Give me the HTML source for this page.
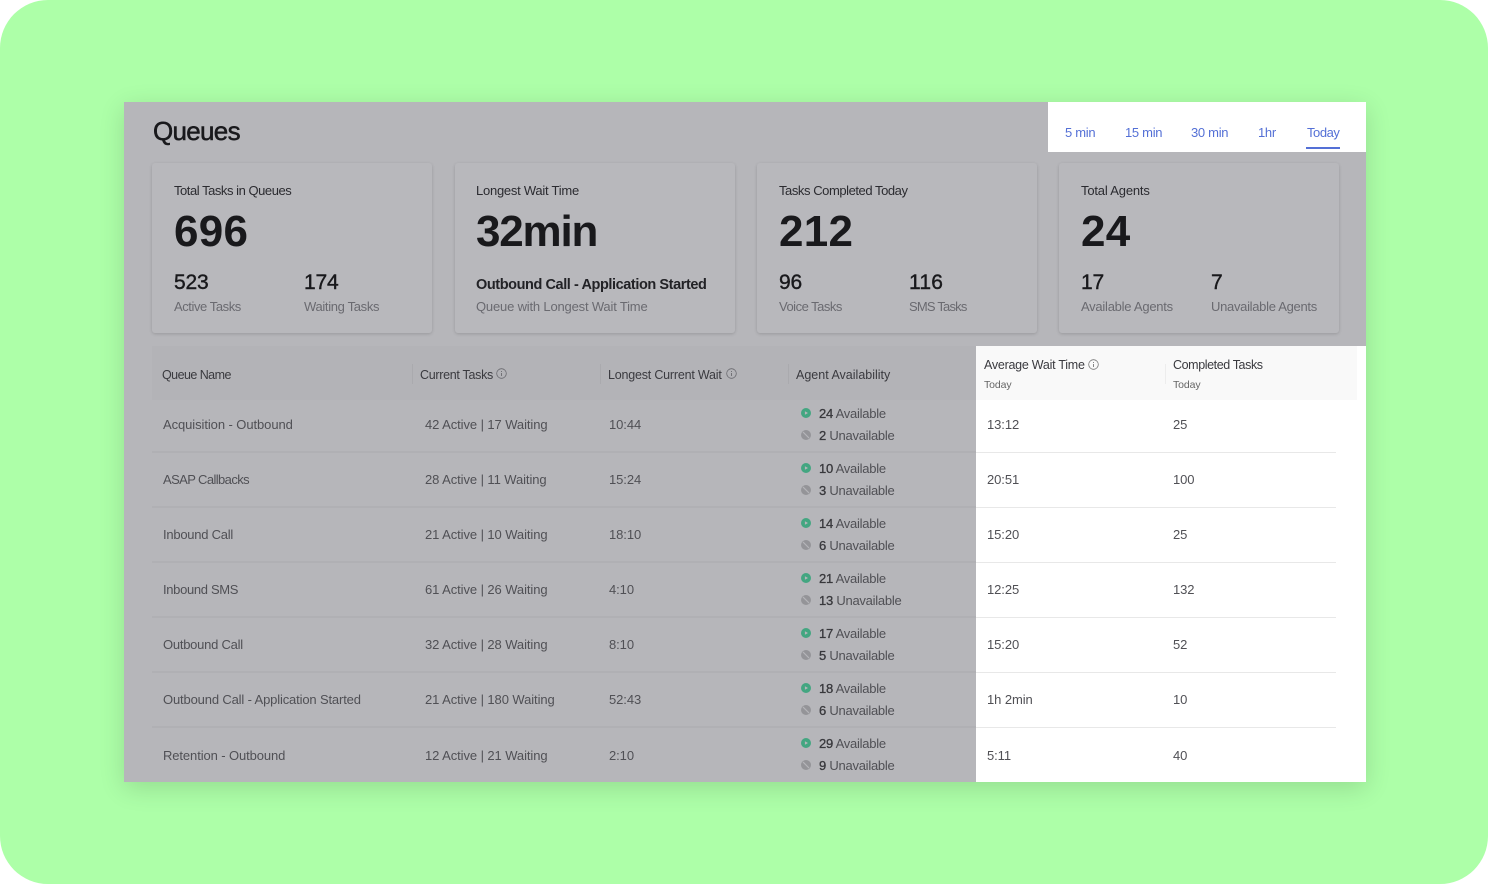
<!DOCTYPE html>
<html><head><meta charset="utf-8"><title>Queues</title>
<style>
html,body{margin:0;padding:0;background:#fff}
#s{position:relative;width:1488px;height:884px;overflow:hidden;background:#fff;font-family:"Liberation Sans",sans-serif}
#bg{position:absolute;inset:0;background:#adffa8;border-radius:48px}
.b{position:absolute}
.t{position:absolute;white-space:nowrap;line-height:20px;font-size:13px;letter-spacing:-.08px;color:#505055;margin-top:1px}
.c{position:absolute;top:163px;width:280px;height:170px;background:#b8b8bc;border-radius:3px;box-shadow:0 1px 3px rgba(0,0,0,.16)}
.ti{color:#2b2b30}.big{font-size:44px;line-height:50px;font-weight:700;color:#19191c;letter-spacing:.3px}
.n{font-size:21px;line-height:24px;font-weight:400;color:#19191c;letter-spacing:-.2px;-webkit-text-stroke:.4px #19191c}
.g{color:#6a6a70;letter-spacing:-.25px}.h{font-size:12.5px;color:#3a3a3f;letter-spacing:-.25px}.hw{font-size:12.5px;color:#3a3a3f;letter-spacing:-.25px;margin-top:0}
.tab{font-size:13px;color:#5470d6;letter-spacing:-.3px}
.i{position:absolute;width:11px;height:11px}
.a{letter-spacing:-.25px}
.a b{font-weight:400;color:#38383c;-webkit-text-stroke:.3px #38383c}
.l{position:absolute;height:2px;background:#b0b0b4;left:152px;width:824px}
.l2{position:absolute;height:1px;background:#e8e8e8;left:976px;width:360px}
.v{position:absolute;width:1px;height:20px;background:#aaaaae;top:364px}
</style></head><body>
<div id="s">
<div id="bg"></div>
<div class="b" style="left:124px;top:102px;width:1242px;height:680px;background:#fff;box-shadow:0 6px 24px rgba(0,0,0,.14)"></div>
<div class="b" style="left:124px;top:102px;width:924px;height:50px;background:#b6b6ba"></div>
<div class="b" style="left:124px;top:152px;width:1242px;height:194px;background:#b6b6ba"></div>
<div class="b" style="left:124px;top:346px;width:852px;height:436px;background:#b6b6ba"></div>

<div class="t" style="left:153px;top:120px;font-size:26px;letter-spacing:-.7px;color:#19191c;-webkit-text-stroke:.5px #19191c">Queues</div>

<div class="t tab" style="left:1065px;top:122px">5 min</div>
<div class="t tab" style="left:1125px;top:122px">15 min</div>
<div class="t tab" style="left:1191px;top:122px">30 min</div>
<div class="t tab" style="left:1258px;top:122px">1hr</div>
<div class="t tab" style="left:1307px;top:122px;letter-spacing:-.45px">Today</div>
<div class="b" style="left:1306px;top:147px;width:34px;height:2px;background:#5470d6"></div>

<div class="c" style="left:152px"></div>
<div class="c" style="left:455px"></div>
<div class="c" style="left:757px"></div>
<div class="c" style="left:1059px"></div>

<div class="t ti" style="left:174px;top:180px;letter-spacing:-.46px">Total Tasks in Queues</div>
<div class="t big" style="left:174px;top:206px">696</div>
<div class="t n" style="left:174px;top:270px">523</div>
<div class="t n" style="left:304px;top:270px">174</div>
<div class="t g" style="left:174px;top:296px;letter-spacing:-.43px">Active Tasks</div>
<div class="t g" style="left:304px;top:296px;letter-spacing:-.33px">Waiting Tasks</div>

<div class="t ti" style="left:476px;top:180px;letter-spacing:-.25px">Longest Wait Time</div>
<div class="t big" style="left:476px;top:206px;letter-spacing:-1.2px">32min</div>
<div class="t" style="left:476px;top:274px;font-size:14.5px;font-weight:700;color:#222226;letter-spacing:-.42px">Outbound Call - Application Started</div>
<div class="t g" style="left:476px;top:296px;letter-spacing:-.18px">Queue with Longest Wait Time</div>

<div class="t ti" style="left:779px;top:180px;letter-spacing:-.44px">Tasks Completed Today</div>
<div class="t big" style="left:779px;top:206px">212</div>
<div class="t n" style="left:779px;top:270px">96</div>
<div class="t n" style="left:909px;top:270px;letter-spacing:.2px">116</div>
<div class="t g" style="left:779px;top:296px;letter-spacing:-.5px">Voice Tasks</div>
<div class="t g" style="left:909px;top:296px;letter-spacing:-.8px">SMS Tasks</div>

<div class="t ti" style="left:1081px;top:180px;letter-spacing:-.18px">Total Agents</div>
<div class="t big" style="left:1081px;top:206px">24</div>
<div class="t n" style="left:1081px;top:270px">17</div>
<div class="t n" style="left:1211px;top:270px">7</div>
<div class="t g" style="left:1081px;top:296px">Available Agents</div>
<div class="t g" style="left:1211px;top:296px;letter-spacing:-.3px">Unavailable Agents</div>

<!-- table head -->
<div class="b" style="left:152px;top:346px;width:824px;height:54px;background:#b3b3b7"></div>
<div class="b" style="left:976px;top:346px;width:381px;height:54px;background:#f9f9f9"></div>
<div class="v" style="left:412px"></div><div class="v" style="left:600px"></div><div class="v" style="left:788px"></div><div class="v" style="left:1165px;background:#ededed"></div>
<div class="t h" style="left:162px;top:364px;letter-spacing:-.55px">Queue Name</div>
<div class="t h" style="left:420px;top:364px;letter-spacing:-.3px">Current Tasks</div>
<svg class="i" style="left:496px;top:368px" viewBox="0 0 11 11" fill="none" stroke="#6a6a70"><circle cx="5.5" cy="5.5" r="4.8" stroke-width=".8"/><path d="M5.5 5v3M5.5 3v1" stroke-width=".9"/></svg>
<div class="t h" style="left:608px;top:364px;letter-spacing:-.2px">Longest Current Wait</div>
<svg class="i" style="left:726px;top:368px" viewBox="0 0 11 11" fill="none" stroke="#6a6a70"><circle cx="5.5" cy="5.5" r="4.8" stroke-width=".8"/><path d="M5.5 5v3M5.5 3v1" stroke-width=".9"/></svg>
<div class="t h" style="left:796px;top:364px;letter-spacing:0">Agent Availability</div>
<div class="t hw" style="left:984px;top:355px">Average Wait Time</div>
<svg class="i" style="left:1088px;top:359px" viewBox="0 0 11 11" fill="none" stroke="#777"><circle cx="5.5" cy="5.5" r="4.8" stroke-width=".8"/><path d="M5.5 5v3M5.5 3v1" stroke-width=".9"/></svg>
<div class="t" style="left:984px;top:375px;margin-top:0;font-size:10.5px;letter-spacing:-.1px;color:#666">Today</div>
<div class="t hw" style="left:1173px;top:355px;letter-spacing:-.4px">Completed Tasks</div>
<div class="t" style="left:1173px;top:375px;margin-top:0;font-size:10.5px;letter-spacing:-.1px;color:#666">Today</div>

<!-- row lines -->
<div class="l" style="top:451px"></div><div class="l2" style="top:452px"></div>
<div class="l" style="top:506px"></div><div class="l2" style="top:507px"></div>
<div class="l" style="top:561px"></div><div class="l2" style="top:562px"></div>
<div class="l" style="top:616px"></div><div class="l2" style="top:617px"></div>
<div class="l" style="top:671px"></div><div class="l2" style="top:672px"></div>
<div class="l" style="top:726px"></div><div class="l2" style="top:727px"></div>

<!-- rows -->
<div class="t" style="left:163px;top:414px">Acquisition - Outbound</div><div class="t" style="left:425px;top:414px">42 Active | 17 Waiting</div><div class="t" style="left:609px;top:414px">10:44</div>
<div class="t" style="left:163px;top:469px;letter-spacing:-.6px">ASAP Callbacks</div><div class="t" style="left:425px;top:469px">28 Active | 11 Waiting</div><div class="t" style="left:609px;top:469px">15:24</div>
<div class="t" style="left:163px;top:524px;letter-spacing:-.25px">Inbound Call</div><div class="t" style="left:425px;top:524px">21 Active | 10 Waiting</div><div class="t" style="left:609px;top:524px">18:10</div>
<div class="t" style="left:163px;top:579px;letter-spacing:-.33px">Inbound SMS</div><div class="t" style="left:425px;top:579px">61 Active | 26 Waiting</div><div class="t" style="left:609px;top:579px">4:10</div>
<div class="t" style="left:163px;top:634px;letter-spacing:-.25px">Outbound Call</div><div class="t" style="left:425px;top:634px">32 Active | 28 Waiting</div><div class="t" style="left:609px;top:634px">8:10</div>
<div class="t" style="left:163px;top:689px;letter-spacing:-.15px">Outbound Call - Application Started</div><div class="t" style="left:425px;top:689px">21 Active | 180 Waiting</div><div class="t" style="left:609px;top:689px">52:43</div>
<div class="t" style="left:163px;top:745px;letter-spacing:-.1px">Retention - Outbound</div><div class="t" style="left:425px;top:745px">12 Active | 21 Waiting</div><div class="t" style="left:609px;top:745px">2:10</div>

<!-- availability -->
<svg style="position:absolute;left:0;top:0;pointer-events:none" width="1488" height="884">
<defs>
<g id="ga"><circle cx="5" cy="5" r="5" fill="#43a681"/><path d="M3.9 3.2L7 5 3.9 6.8z" fill="#b6b6ba"/></g>
<g id="gu"><circle cx="5" cy="5" r="5" fill="#949498"/><path d="M2 2L8 8" stroke="#b6b6ba" stroke-width="1.2"/></g>
</defs>
<use href="#ga" x="801" y="408"/><use href="#gu" x="801" y="430"/>
<use href="#ga" x="801" y="463"/><use href="#gu" x="801" y="485"/>
<use href="#ga" x="801" y="518"/><use href="#gu" x="801" y="540"/>
<use href="#ga" x="801" y="573"/><use href="#gu" x="801" y="595"/>
<use href="#ga" x="801" y="628"/><use href="#gu" x="801" y="650"/>
<use href="#ga" x="801" y="683"/><use href="#gu" x="801" y="705"/>
<use href="#ga" x="801" y="738"/><use href="#gu" x="801" y="760"/>
</svg>
<div class="t a" style="left:819px;top:403px"><b>24</b> Available</div><div class="t a" style="left:819px;top:425px"><b>2</b> Unavailable</div>
<div class="t a" style="left:819px;top:458px"><b>10</b> Available</div><div class="t a" style="left:819px;top:480px"><b>3</b> Unavailable</div>
<div class="t a" style="left:819px;top:513px"><b>14</b> Available</div><div class="t a" style="left:819px;top:535px"><b>6</b> Unavailable</div>
<div class="t a" style="left:819px;top:568px"><b>21</b> Available</div><div class="t a" style="left:819px;top:590px"><b>13</b> Unavailable</div>
<div class="t a" style="left:819px;top:623px"><b>17</b> Available</div><div class="t a" style="left:819px;top:645px"><b>5</b> Unavailable</div>
<div class="t a" style="left:819px;top:678px"><b>18</b> Available</div><div class="t a" style="left:819px;top:700px"><b>6</b> Unavailable</div>
<div class="t a" style="left:819px;top:733px"><b>29</b> Available</div><div class="t a" style="left:819px;top:755px"><b>9</b> Unavailable</div>

<div class="t" style="left:987px;top:414px">13:12</div><div class="t" style="left:1173px;top:414px">25</div>
<div class="t" style="left:987px;top:469px">20:51</div><div class="t" style="left:1173px;top:469px">100</div>
<div class="t" style="left:987px;top:524px">15:20</div><div class="t" style="left:1173px;top:524px">25</div>
<div class="t" style="left:987px;top:579px">12:25</div><div class="t" style="left:1173px;top:579px">132</div>
<div class="t" style="left:987px;top:634px">15:20</div><div class="t" style="left:1173px;top:634px">52</div>
<div class="t" style="left:987px;top:689px">1h 2min</div><div class="t" style="left:1173px;top:689px">10</div>
<div class="t" style="left:987px;top:745px">5:11</div><div class="t" style="left:1173px;top:745px">40</div>
</div>
</body></html>
